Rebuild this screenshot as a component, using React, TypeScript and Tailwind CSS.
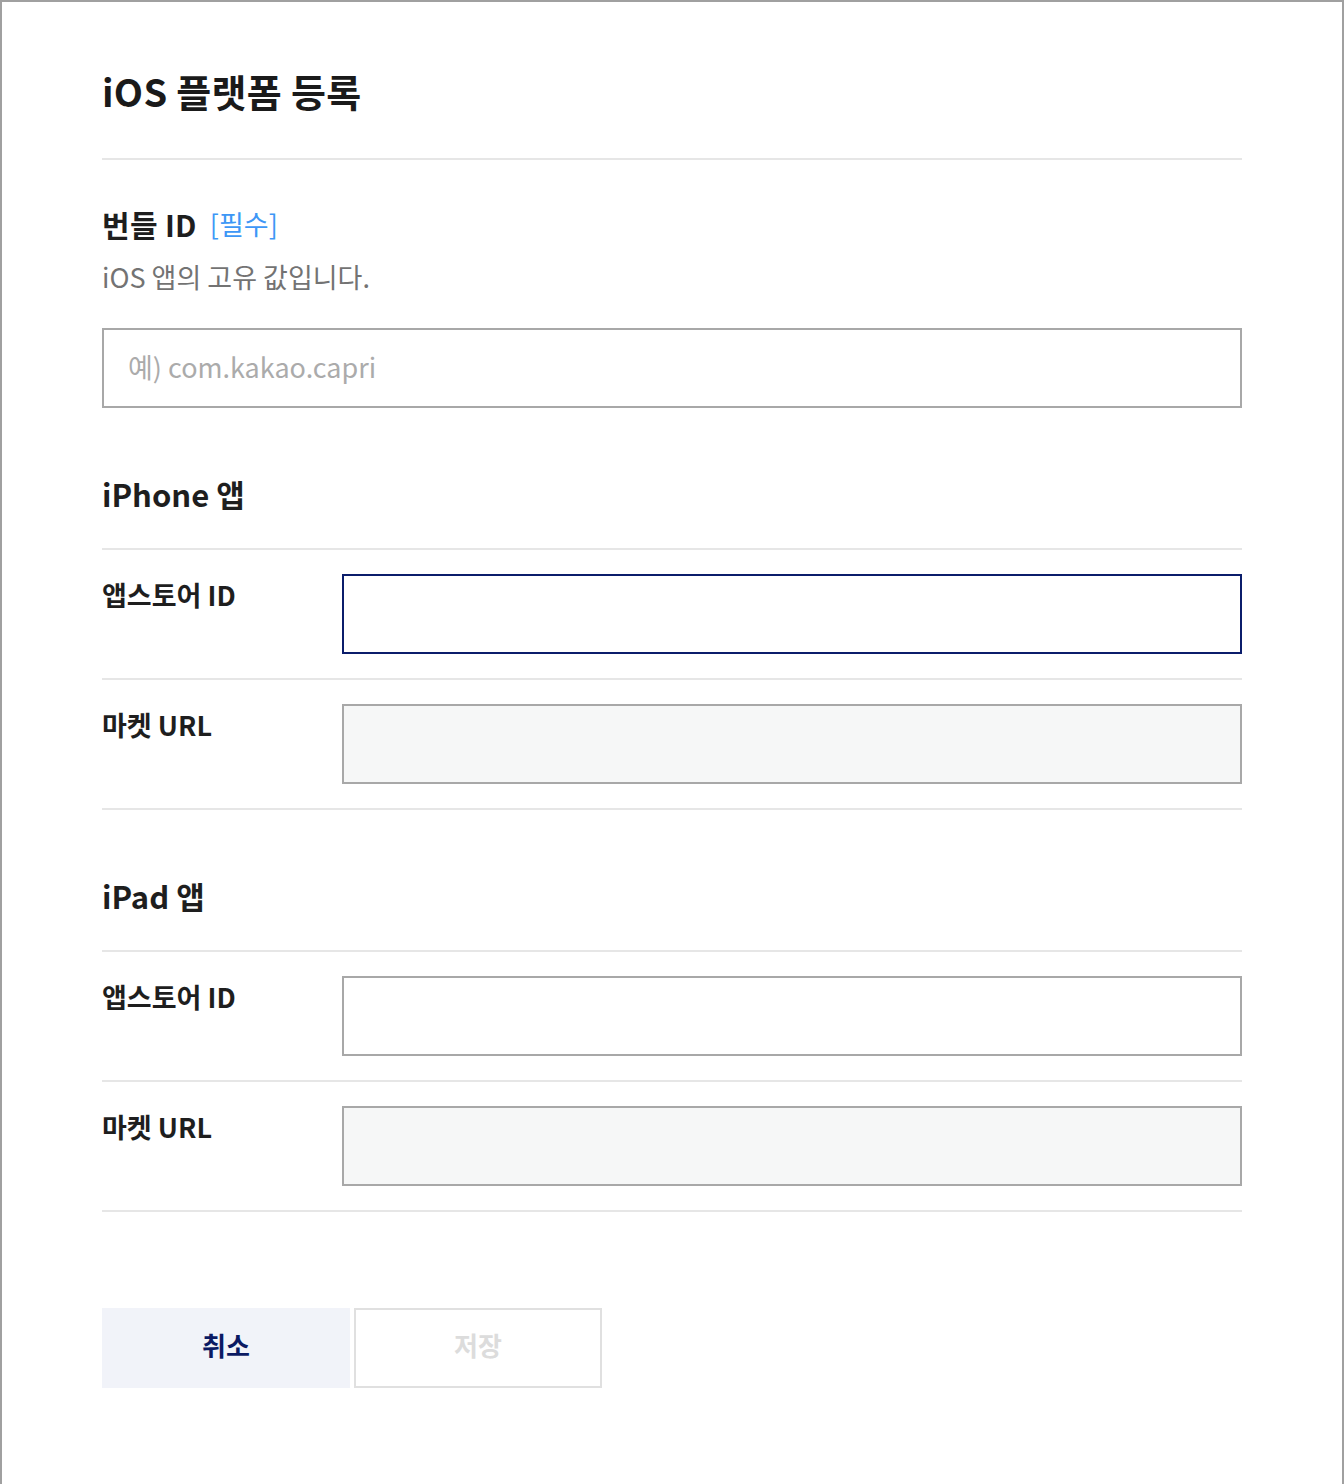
import React from 'react'

const font = { fontFamily: '"Noto Sans CJK KR", "Noto Sans", sans-serif' }

function FieldRow({ label, focused, disabled }: { label: string; focused?: boolean; disabled?: boolean }) {
  let inputClass = 'border-[#a8a8a8] bg-white'
  if (focused) inputClass = 'border-[#0b1d6b] bg-white'
  if (disabled) inputClass = 'border-[#a8a8a8] bg-[#f6f7f7]'

  return (
    <div>
      <div className="flex py-6">
        <div className="w-[240px] shrink-0 text-[27px] leading-[41px] font-bold text-[#1e1e1e]">{label}</div>
        <input
          disabled={disabled}
          className={`h-20 flex-1 border-2 px-6 text-[26px] outline-none ${inputClass}`}
        />
      </div>
      <div className="h-[2px] bg-[#e6e6e6]" />
    </div>
  )
}

function AppSection({ title }: { title: string }) {
  return (
    <div className="mt-[64px]">
      <h3 className="text-[31px] leading-[44px] font-bold text-[#1e1e1e]">{title}</h3>
      <div className="mt-[32px] h-[2px] bg-[#e6e6e6]" />
    </div>
  )
}

export default function App() {
  return (
    <div className="min-h-[1484px] bg-white border-t-2 border-x-2 border-[#a0a0a0]" style={font}>
      <div className="px-[100px] pt-[63px] pb-24">
        {/* Header */}
        <h1 className="text-[38px] leading-[52px] font-bold text-[#1a1a1a] tracking-[0.3px]">iOS 플랫폼 등록</h1>
        <div className="mt-[41px] h-[2px] bg-[#e6e6e6]" />

        {/* Bundle ID */}
        <div className="mt-[44px] flex items-center gap-[13px]">
          <span className="text-[30px] leading-[40px] font-bold text-[#1e1e1e] tracking-[0.3px]">번들 ID</span>
          <span className="text-[27px] leading-[40px] text-[#3d97f6]">[필수]</span>
        </div>
        <p className="mt-[14px] text-[27px] leading-[38px] text-[#737373]">iOS 앱의 고유 값입니다.</p>
        <input
          placeholder="예) com.kakao.capri"
          className="mt-8 h-20 w-full border-2 border-[#a8a8a8] px-6 pb-1 text-[27px] text-[#333] outline-none placeholder:text-[#ababab]"
        />

        {/* iPhone */}
        <AppSection title="iPhone 앱" />
        <FieldRow label="앱스토어 ID" focused />
        <FieldRow label="마켓 URL" disabled />

        {/* iPad */}
        <AppSection title="iPad 앱" />
        <FieldRow label="앱스토어 ID" />
        <FieldRow label="마켓 URL" disabled />

        {/* Buttons */}
        <div className="mt-24 flex gap-1">
          <button className="h-20 w-[248px] bg-[#f1f3f9] pb-2 text-[26px] font-bold text-[#0b1a63]">취소</button>
          <button disabled className="h-20 w-[248px] border-2 border-[#e0e0e0] bg-white pb-2 text-[26px] font-bold text-[#dcdcdc]">
            저장
          </button>
        </div>
      </div>
    </div>
  )
}
